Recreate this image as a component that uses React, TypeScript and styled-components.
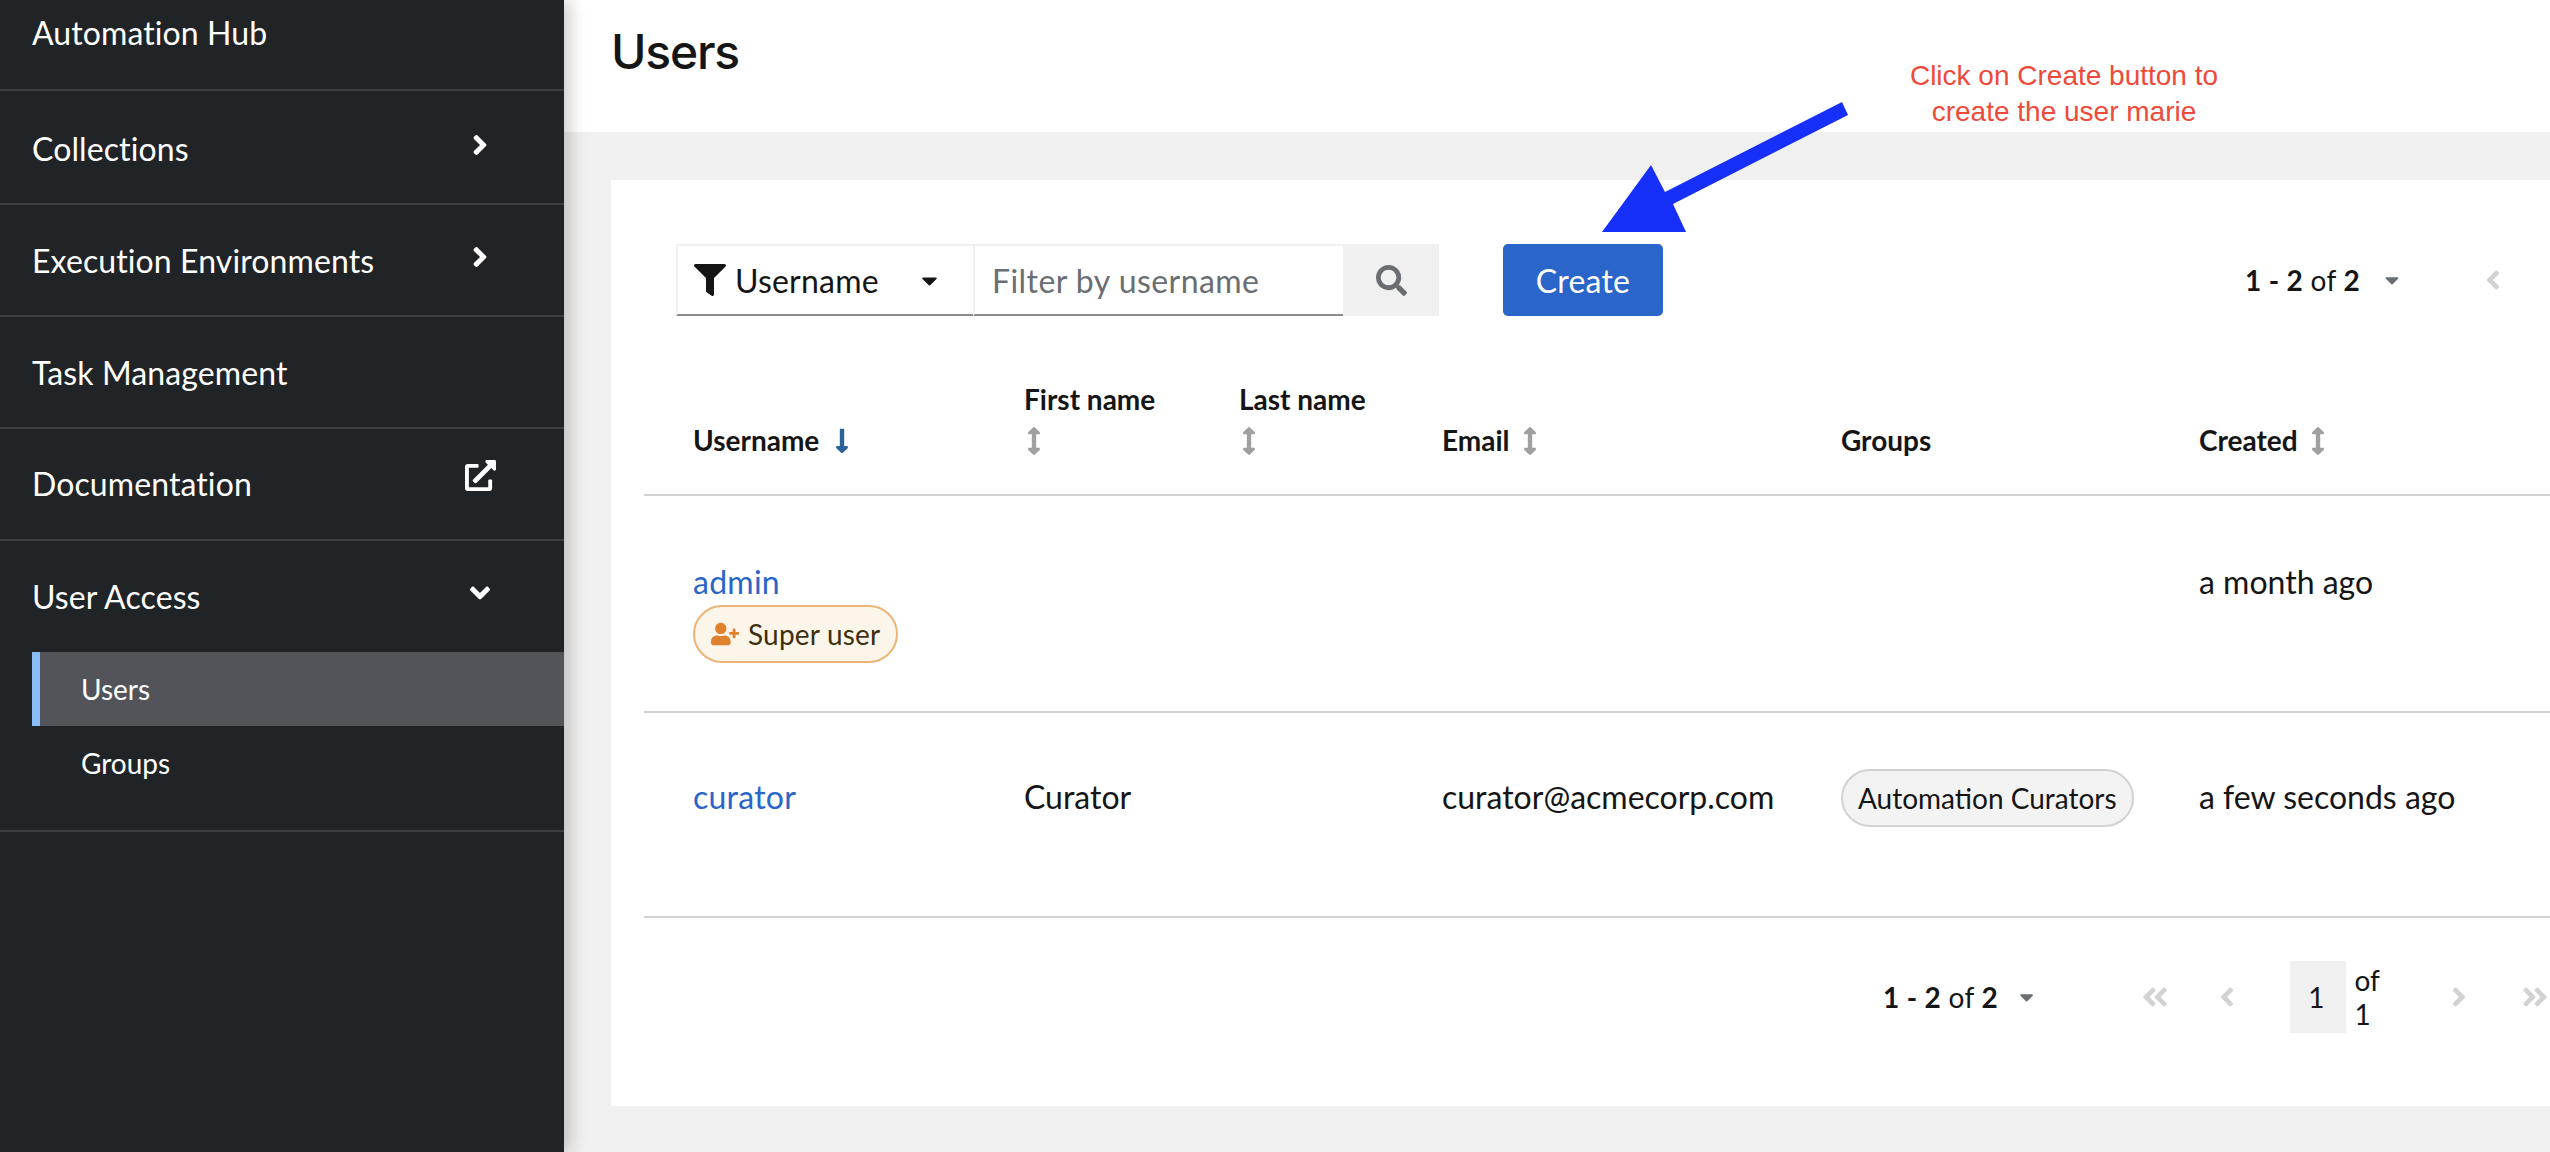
import React from "react";
import styled, { createGlobalStyle } from "styled-components";
import {
  FaAngleDoubleLeft,
  FaAngleDoubleRight,
  FaAngleDown,
  FaAngleLeft,
  FaAngleRight,
  FaArrowsAltV,
  FaCaretDown,
  FaExternalLinkAlt,
  FaFilter,
  FaLongArrowAltDown,
  FaSearch,
  FaUserPlus,
} from "react-icons/fa";

const Global = createGlobalStyle`
  html, body { margin: 0; padding: 0; }
  body { font-family: Lato, "Noto Sans", sans-serif; color: #151515; background: #fff; }
  * { box-sizing: border-box; }
`;

const Page = styled.div`
  position: relative;
  display: flex;
  width: 2550px;
  height: 1152px;
  overflow: hidden;
`;

const Sidebar = styled.nav`
  position: relative;
  z-index: 2;
  flex: 0 0 564px;
  background: #212427;
  color: #fff;
  box-shadow: 6px 0 16px rgba(0, 0, 0, 0.2);
`;

const NavSection = styled.div<{ $height: number; $textTop: number }>`
  height: ${(p) => p.$height}px;
  padding: ${(p) => p.$textTop}px 64px 0 32px;
  border-bottom: 2px solid #3c3f42;
`;

const NavRow = styled.div`
  display: flex;
  align-items: center;
  justify-content: space-between;
  height: 48px;
  font-size: 32px;
  letter-spacing: 0.1px;
`;

const NavIcon = styled.span<{ $size: number; $shift?: number }>`
  display: flex;
  width: 40px;
  justify-content: center;
  font-size: ${(p) => p.$size}px;
  transform: translateY(${(p) => p.$shift ?? -3}px);
`;

const SubList = styled.div`
  margin-top: 32px;
  margin-left: -0px;
  margin-right: -64px;
`;

const SubItem = styled.div<{ $active?: boolean }>`
  display: flex;
  align-items: center;
  height: 74px;
  padding-left: ${(p) => (p.$active ? 41 : 49)}px;
  font-size: 28px;
  background: ${(p) => (p.$active ? "#525459" : "transparent")};
  border-left: ${(p) => (p.$active ? "8px solid #8abdf5" : "none")};
`;

const Main = styled.main`
  flex: 1;
  display: flex;
  flex-direction: column;
  background: #f0f0f0;
  min-width: 0;
`;

const Header = styled.header`
  height: 132px;
  background: #fff;
  padding: 24px 0 0 47px;
`;

const Title = styled.h1`
  margin: 0;
  font-size: 48px;
  line-height: 56px;
  font-weight: 500;
  color: #151515;
  font-family: Inter, Lato, sans-serif;
  letter-spacing: -1.2px;
`;

const Card = styled.section`
  margin: 48px 0 46px 47px;
  flex: 1;
  background: #fff;
  padding: 64px 0 0 33px;
`;

const Toolbar = styled.div`
  display: flex;
  align-items: stretch;
  height: 72px;
  margin-left: 32px;
`;

const FilterSelect = styled.div`
  display: flex;
  align-items: center;
  width: 297px;
  padding-left: 16px;
  border: 2px solid #f0f0f0;
  border-bottom-color: #8a8d90;
  border-right: none;
  font-size: 32px;
  letter-spacing: 0.2px;
`;

const FilterGlyph = styled(FaFilter)`
  font-size: 32px;
  margin-right: 9px;
`;

const SelectCaret = styled(FaCaretDown)`
  font-size: 25px;
  margin-left: 38px;
`;

const FilterInput = styled.div`
  display: flex;
  align-items: center;
  width: 370px;
  padding-left: 17px;
  border: 2px solid #f0f0f0;
  border-bottom-color: #8a8d90;
  border-right: none;
  font-size: 32px;
  color: #6a6e73;
  letter-spacing: 0.45px;
`;

const SearchButton = styled.div`
  display: flex;
  align-items: center;
  justify-content: center;
  width: 96px;
  background: #f0f0f0;
  color: #6a6e73;
  font-size: 31px;
`;

const CreateButton = styled.button`
  margin-left: 64px;
  width: 160px;
  border: none;
  border-radius: 5px;
  background: #2a65c9;
  color: #fff;
  font: 400 32px Lato, sans-serif;
  letter-spacing: 0.2px;
  padding: 0;
`;

const PagerTop = styled.div`
  display: flex;
  align-items: center;
  margin-left: 582px;
`;

const Range = styled.span`
  font-size: 28px;
  white-space: pre;
  letter-spacing: 0.3px;
  b { font-weight: 700; }
`;

const PagerCaret = styled(FaCaretDown)`
  font-size: 22px;
  color: #6a6e73;
  margin-left: 21px;
`;

const PagerChevron = styled.span<{ $left: number }>`
  display: flex;
  margin-left: ${(p) => p.$left}px;
  color: #d2d2d2;
  font-size: 30px;
`;

const Table = styled.div`
  margin-top: 0;
`;

const columns = "380px 215px 203px 399px 358px 1fr";

const HeadRow = styled.div`
  display: grid;
  grid-template-columns: ${columns};
  align-items: end;
  height: 180px;
  padding-bottom: 33px;
  padding-left: 0;
  border-bottom: 2px solid #d2d2d2;
`;

const HeadCell = styled.div`
  font-size: 28px;
  font-weight: 700;
  line-height: 41px;
  &:first-child { padding-left: 49px; }
`;

const SortIcon = styled.span<{ $active?: boolean }>`
  display: inline-flex;
  vertical-align: -4px;
  margin-left: ${(p) => (p.$active ? 9 : 6)}px;
  font-size: 28px;
  color: ${(p) => (p.$active ? "#2b6399" : "#a0a0a0")};
`;

const StackIcon = styled(SortIcon)`
  display: flex;
  margin-left: -4px;
  height: 41px;
  align-items: center;
`;

const Row = styled.div<{ $height: number; $top: number }>`
  display: grid;
  grid-template-columns: ${columns};
  align-items: start;
  height: ${(p) => p.$height}px;
  padding-top: ${(p) => p.$top}px;
  border-bottom: 2px solid #d2d2d2;
  font-size: 32px;
  line-height: 48px;
`;

const Cell = styled.div`
  &:first-child { padding-left: 49px; }
`;

const UserLink = styled.a`
  display: block;
  color: #2a65c9;
  letter-spacing: 0.25px;
`;

const SuperBadge = styled.span`
  display: inline-flex;
  align-items: center;
  height: 58px;
  margin-top: -1px;
  padding: 0 16px;
  border: 2px solid #edb477;
  border-radius: 29px;
  background: #fcf6ea;
  color: #3d2f10;
  font-size: 28px;
  letter-spacing: 0.2px;
`;

const BadgeIcon = styled(FaUserPlus)`
  color: #e0812d;
  font-size: 28px;
  margin-right: 9px;
`;

const GroupPill = styled.span`
  display: inline-flex;
  align-items: center;
  height: 58px;
  margin-top: -4px;
  padding: 0 15px;
  border: 2px solid #d2d2d2;
  border-radius: 29px;
  background: #f3f3f3;
  font-size: 28px;
  white-space: nowrap;
`;

const Created = styled.div`
  width: 270px;
`;

const Footer = styled.div`
  display: flex;
  align-items: center;
  height: 72px;
  margin-top: 43px;
  margin-left: 1239px;
  font-size: 28px;
`;

const PageInput = styled.span`
  display: flex;
  align-items: center;
  width: 73px;
  height: 72px;
  margin-left: 48px;
  padding-left: 18px;
  background: #f0f0f0;
`;

const OfLabel = styled.span`
  margin-left: 8px;
`;

const Note = styled.div`
  position: absolute;
  left: 1864px;
  top: 58px;
  width: 400px;
  text-align: center;
  font: 400 28px/36px "Liberation Sans", Arial, sans-serif;
  color: #ee4a3a;
  z-index: 3;
`;

const ArrowOverlay = styled.svg`
  position: absolute;
  left: 1590px;
  top: 95px;
  z-index: 3;
`;

const Sort = () => (
  <SortIcon>
    <FaArrowsAltV />
  </SortIcon>
);

export default function App() {
  return (
    <Page>
      <Global />
      <Sidebar>
        <NavSection $height={91} $textTop={8}>
          <NavRow>Automation Hub</NavRow>
        </NavSection>
        <NavSection $height={114} $textTop={33}>
          <NavRow>
            Collections
            <NavIcon $size={32}>
              <FaAngleRight />
            </NavIcon>
          </NavRow>
        </NavSection>
        <NavSection $height={112} $textTop={31}>
          <NavRow>
            Execution Environments
            <NavIcon $size={32}>
              <FaAngleRight />
            </NavIcon>
          </NavRow>
        </NavSection>
        <NavSection $height={112} $textTop={31}>
          <NavRow>Task Management</NavRow>
        </NavSection>
        <NavSection $height={112} $textTop={30}>
          <NavRow>
            Documentation
            <NavIcon $size={31} $shift={-8}>
              <FaExternalLinkAlt />
            </NavIcon>
          </NavRow>
        </NavSection>
        <NavSection $height={291} $textTop={31}>
          <NavRow>
            User Access
            <NavIcon $size={32}>
              <FaAngleDown />
            </NavIcon>
          </NavRow>
          <SubList>
            <SubItem $active>Users</SubItem>
            <SubItem>Groups</SubItem>
          </SubList>
        </NavSection>
      </Sidebar>

      <Main>
        <Header>
          <Title>Users</Title>
        </Header>
        <Card>
          <Toolbar>
            <FilterSelect>
              <FilterGlyph />
              Username
              <SelectCaret />
            </FilterSelect>
            <FilterInput>Filter by username</FilterInput>
            <SearchButton>
              <FaSearch />
            </SearchButton>
            <CreateButton>Create</CreateButton>
            <PagerTop>
              <Range>
                <b>1 - 2</b> of <b>2</b>
              </Range>
              <PagerCaret />
              <PagerChevron $left={75}>
                <FaAngleLeft />
              </PagerChevron>
            </PagerTop>
          </Toolbar>

          <Table>
            <HeadRow>
              <HeadCell>
                Username
                <SortIcon $active>
                  <FaLongArrowAltDown />
                </SortIcon>
              </HeadCell>
              <HeadCell>
                First name
                <StackIcon>
                  <FaArrowsAltV />
                </StackIcon>
              </HeadCell>
              <HeadCell>
                Last name
                <StackIcon>
                  <FaArrowsAltV />
                </StackIcon>
              </HeadCell>
              <HeadCell>
                Email
                <Sort />
              </HeadCell>
              <HeadCell>Groups</HeadCell>
              <HeadCell>
                Created
                <Sort />
              </HeadCell>
            </HeadRow>
            <Row $height={217} $top={62}>
              <Cell>
                <UserLink>admin</UserLink>
                <SuperBadge>
                  <BadgeIcon />
                  Super user
                </SuperBadge>
              </Cell>
              <Cell />
              <Cell />
              <Cell />
              <Cell />
              <Cell>a month ago</Cell>
            </Row>
            <Row $height={205} $top={60}>
              <Cell>
                <UserLink>curator</UserLink>
              </Cell>
              <Cell>Curator</Cell>
              <Cell />
              <Cell>curator@acmecorp.com</Cell>
              <Cell>
                <GroupPill>Automation Curators</GroupPill>
              </Cell>
              <Cell>
                <Created>a few seconds ago</Created>
              </Cell>
            </Row>
          </Table>

          <Footer>
            <Range>
              <b>1 - 2</b> of <b>2</b>
            </Range>
            <PagerCaret />
            <PagerChevron $left={106}>
              <FaAngleDoubleLeft />
            </PagerChevron>
            <PagerChevron $left={42}>
              <FaAngleLeft />
            </PagerChevron>
            <PageInput>1</PageInput>
            <OfLabel>of 1</OfLabel>
            <PagerChevron $left={56}>
              <FaAngleRight />
            </PagerChevron>
            <PagerChevron $left={46}>
              <FaAngleDoubleRight />
            </PagerChevron>
          </Footer>
        </Card>
      </Main>

      <Note>
        Click on Create button to
        <br />
        create the user marie
      </Note>
      <ArrowOverlay width="270" height="145" viewBox="1590 95 270 145">
        <polygon
          points="1842,102 1848,115 1673,204 1686,232 1602,232 1651,165 1665,192"
          fill="#1630fa"
        />
      </ArrowOverlay>
    </Page>
  );
}
